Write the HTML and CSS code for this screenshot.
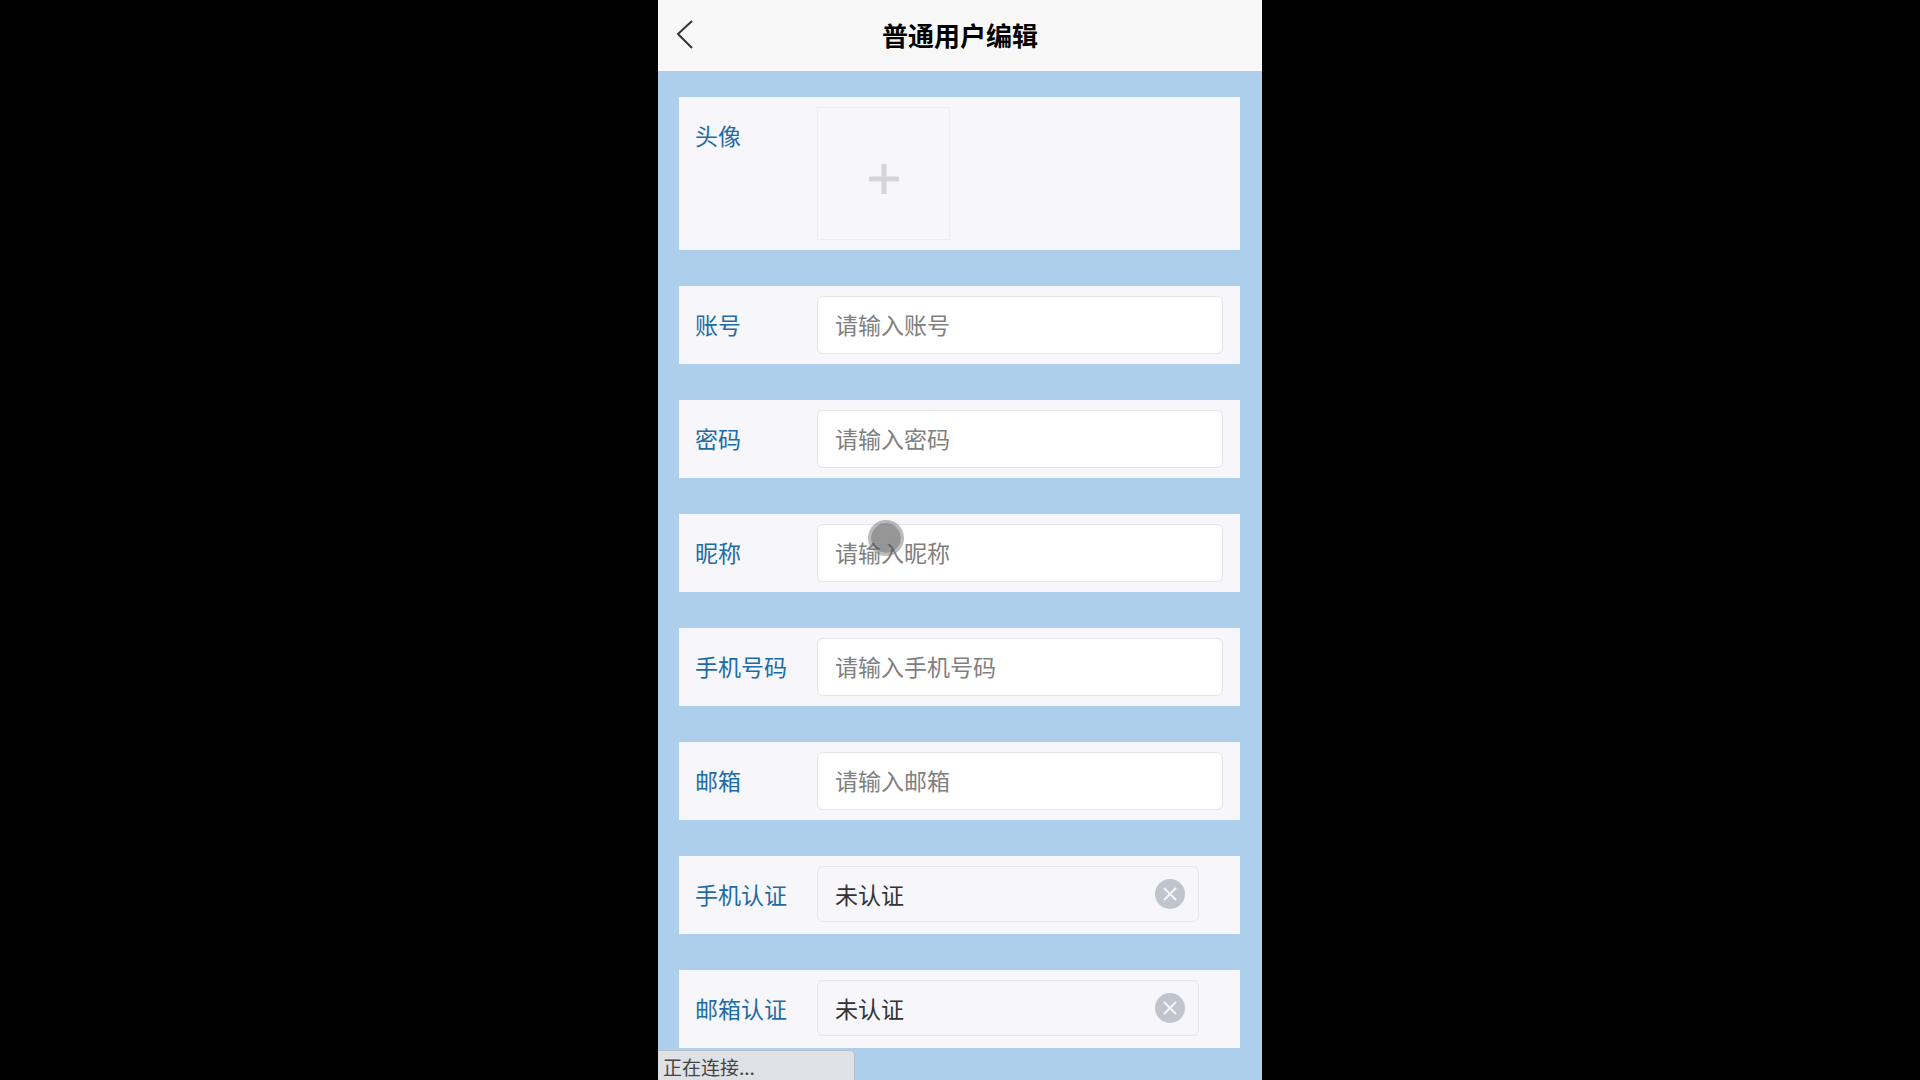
FILE: index.html
```html
<!DOCTYPE html>
<html lang="zh-CN">
<head>
    <meta charset="UTF-8">
    <meta name="viewport" content="width=device-width, initial-scale=1.0">
    <title>普通用户编辑</title>
    <link rel="stylesheet" href="styles.css">
</head>
<body>
    <div class="phone">
        <header class="navbar">
            <button type="button" class="back" aria-label="返回">
                <svg width="20" height="32" viewBox="0 0 20 32" fill="none" stroke="#333" stroke-width="2">
                    <path d="M18 3L4 16L18 30"/>
                </svg>
            </button>
            <h1>普通用户编辑</h1>
        </header>

        <form class="form">
            <div class="item item-avatar">
                <label for="avatar">头像</label>
                <button type="button" id="avatar" class="upload" aria-label="上传头像">
                    <svg width="30" height="30" viewBox="0 0 30 30" stroke="#d5d5d9" stroke-width="5">
                        <path d="M0 15H30M15 0V30"/>
                    </svg>
                </button>
            </div>

            <div class="item">
                <label for="account">账号</label>
                <input type="text" id="account" placeholder="请输入账号">
            </div>

            <div class="item">
                <label for="password">密码</label>
                <input type="password" id="password" placeholder="请输入密码">
            </div>

            <div class="item">
                <label for="nickname">昵称</label>
                <div class="field">
                    <input type="text" id="nickname" placeholder="请输入昵称">
                    <span class="touch"></span>
                </div>
            </div>

            <div class="item">
                <label for="phone">手机号码</label>
                <input type="tel" id="phone" placeholder="请输入手机号码">
            </div>

            <div class="item">
                <label for="email">邮箱</label>
                <input type="email" id="email" placeholder="请输入邮箱">
            </div>

            <div class="item">
                <label for="phoneAuth">手机认证</label>
                <div class="picker">
                    <select id="phoneAuth">
                        <option>未认证</option>
                        <option>已认证</option>
                    </select>
                    <button type="button" class="clear" aria-label="清除">
                        <svg width="30" height="30" viewBox="0 0 30 30">
                            <circle cx="15" cy="15" r="15" fill="#c0c4cc"/>
                            <path d="M9 9L21 21M21 9L9 21" stroke="#f5f5fa" stroke-width="2"/>
                        </svg>
                    </button>
                </div>
            </div>

            <div class="item">
                <label for="emailAuth">邮箱认证</label>
                <div class="picker">
                    <select id="emailAuth">
                        <option>未认证</option>
                        <option>已认证</option>
                    </select>
                    <button type="button" class="clear" aria-label="清除">
                        <svg width="30" height="30" viewBox="0 0 30 30">
                            <circle cx="15" cy="15" r="15" fill="#c0c4cc"/>
                            <path d="M9 9L21 21M21 9L9 21" stroke="#f5f5fa" stroke-width="2"/>
                        </svg>
                    </button>
                </div>
            </div>
        </form>

        <div class="status">正在连接...</div>
    </div>
</body>
</html>
```
FILE: styles.css
```css
* {
    box-sizing: border-box;
}

body {
    margin: 0;
    background-color: #000;
    font-family: "Noto Sans CJK SC", sans-serif;
    font-size: 23px;
}

button {
    padding: 0;
    border: none;
    background: none;
}

svg {
    display: block;
}

.phone {
    position: relative;
    max-width: 604px;
    min-height: 100vh;
    margin: 0 auto;
    background-color: #aecfeb;
}

.navbar {
    display: grid;
    grid-template-columns: 40px 1fr 40px;
    align-items: center;
    height: 71px;
    padding: 0 16px 2px;
    background-color: #f8f8f8;
}

.back {
    padding-bottom: 2px;
}

.navbar h1 {
    margin: 0;
    font-size: 26px;
    line-height: 40px;
    font-weight: 700;
    text-align: center;
    color: #000;
}

.form {
    display: flex;
    flex-direction: column;
    gap: 36px;
    padding: 26px 22px 32px 21px;
}

.item {
    display: flex;
    align-items: center;
    min-height: 78px;
    padding: 10px 17px 10px 16px;
    background-color: #f6f6fb;
}

.item label {
    flex: 0 0 122px;
    padding-bottom: 2px;
    line-height: 56px;
    color: #1f6ba5;
}

.item-avatar {
    align-items: flex-start;
}

.upload {
    display: flex;
    align-items: center;
    justify-content: center;
    width: 133px;
    height: 133px;
    padding-top: 10px;
    border: 1px solid #eeeef1;
}

.field {
    position: relative;
    display: flex;
    flex: 1;
}

input {
    flex: 1;
    min-width: 0;
    height: 58px;
    padding: 0 17px 2px;
    border: 1px solid #e6e6ea;
    border-radius: 6px;
    background-color: #fff;
    font: inherit;
    color: #333;
}

input::placeholder {
    color: #808080;
}

.picker {
    display: flex;
    flex: 1;
    align-items: center;
    height: 56px;
    margin: 0 24px 2px 0;
    padding: 0 13px 0 17px;
    border: 1px solid #e6e6ea;
    border-radius: 6px;
}

.picker select {
    flex: 1;
    min-width: 0;
    height: 54px;
    padding: 0;
    border: none;
    background: none;
    appearance: none;
    font: inherit;
    color: #333;
}

/* toque simulado */
.touch {
    position: absolute;
    top: -4px;
    left: 51px;
    width: 36px;
    height: 36px;
    border: 3px solid rgba(120, 120, 120, 0.5);
    border-radius: 50%;
    background-color: rgba(80, 80, 80, 0.6);
    background-clip: padding-box;
    pointer-events: none;
}

.status {
    position: absolute;
    left: 0;
    bottom: 0;
    width: 197px;
    height: 30px;
    padding: 2px 5px 0;
    border: 1px solid #b8bfc9;
    border-width: 1px 1px 0 0;
    border-radius: 0 5px 0 0;
    background-color: #dee1e6;
    font-size: 19px;
    line-height: 28px;
    color: #444;
}
```
